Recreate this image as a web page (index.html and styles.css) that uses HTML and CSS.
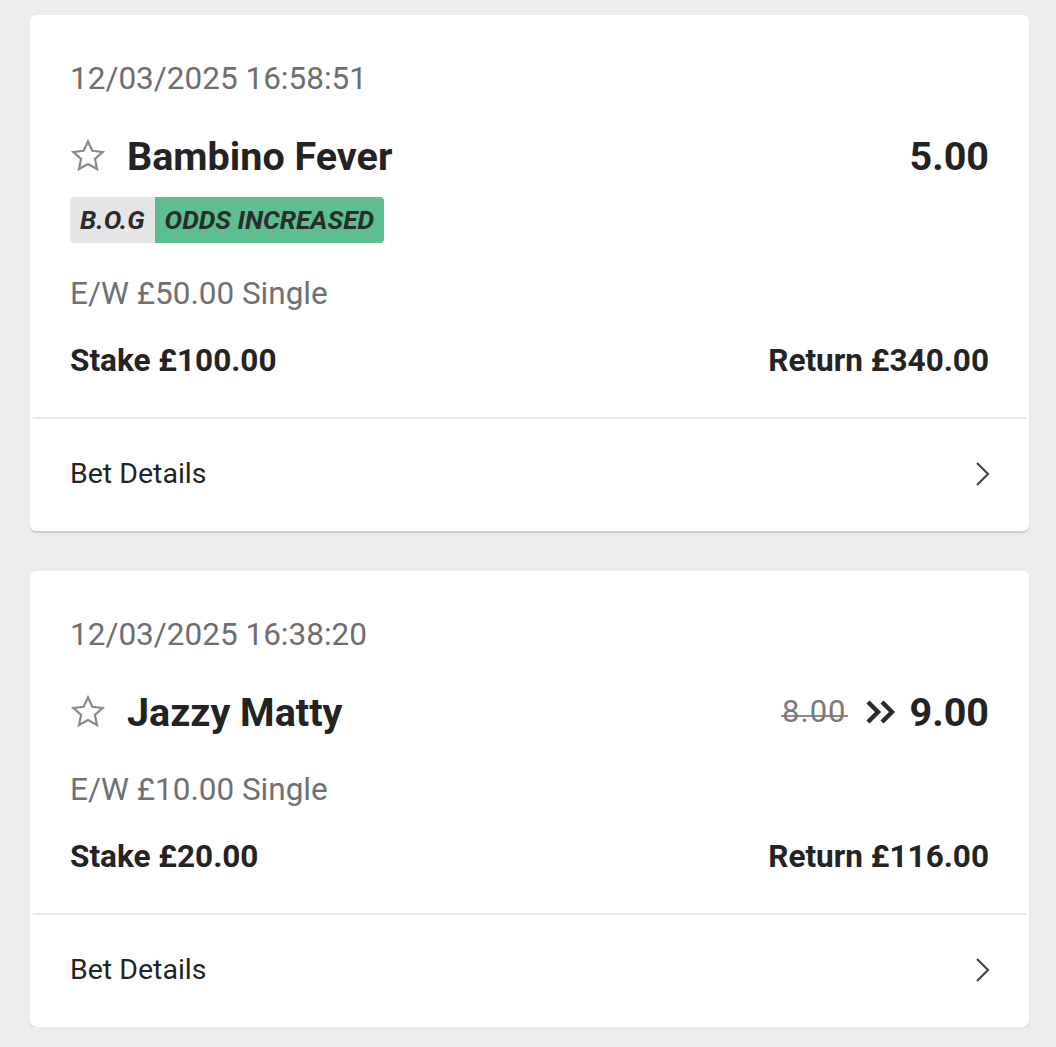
FILE: index.html
```html
<!DOCTYPE html>
<html>
<head>
<meta charset="utf-8">
<link rel="stylesheet" href="styles.css">
</head>
<body>
<div class="list">
  <div class="card">
    <div class="body">
      <div class="date">12/03/2025 16:58:51</div>
      <div class="title-row">
        <div class="name">
          <svg class="star" viewBox="0 0 24 24" width="38" height="38"><path d="M12 2.8l2.75 5.9 6.45.75-4.8 4.4 1.3 6.35L12 17l-5.7 3.2 1.3-6.35-4.8-4.4 6.45-.75z" fill="none" stroke="#8a8a8a" stroke-width="1.4" stroke-linejoin="miter"/></svg>
          <span>Bambino Fever</span>
        </div>
        <div class="odds">5.00</div>
      </div>
      <div class="badges"><span class="bog">B.O.G</span><span class="inc">ODDS INCREASED</span></div>
      <div class="type">E/W £50.00 Single</div>
      <div class="money"><span>Stake £100.00</span><span>Return £340.00</span></div>
    </div>
    <div class="details"><span>Bet Details</span>
      <svg class="chev" viewBox="0 0 16 28" width="16" height="28"><path d="M2 3l11 11L2 25" fill="none" stroke="#444" stroke-width="2.2"/></svg>
    </div>
  </div>
  <div class="card">
    <div class="body">
      <div class="date">12/03/2025 16:38:20</div>
      <div class="title-row">
        <div class="name">
          <svg class="star" viewBox="0 0 24 24" width="38" height="38"><path d="M12 2.8l2.75 5.9 6.45.75-4.8 4.4 1.3 6.35L12 17l-5.7 3.2 1.3-6.35-4.8-4.4 6.45-.75z" fill="none" stroke="#8a8a8a" stroke-width="1.4" stroke-linejoin="miter"/></svg>
          <span>Jazzy Matty</span>
        </div>
        <div class="odds"><span class="old">8.00</span><svg class="arrows" viewBox="0 0 32 24" width="32" height="24"><path d="M3 2l10 10L3 22M17 2l10 10-10 10" fill="none" stroke="#2a2a2a" stroke-width="4.4"/></svg><span>9.00</span></div>
      </div>
      <div class="type second">E/W £10.00 Single</div>
      <div class="money"><span>Stake £20.00</span><span>Return £116.00</span></div>
    </div>
    <div class="details"><span>Bet Details</span>
      <svg class="chev" viewBox="0 0 16 28" width="16" height="28"><path d="M2 3l11 11L2 25" fill="none" stroke="#444" stroke-width="2.2"/></svg>
    </div>
  </div>
</div>
</body>
</html>
```
FILE: styles.css
```css
html, body {
  margin: 0;
  padding: 0;
  background: #ebeceb;
  font-family: Roboto, "Liberation Sans", sans-serif;
  color: #232323;
}
.list {
  padding: 15px 27px 0 30px;
  display: flex;
  flex-direction: column;
  gap: 40px;
}
.card {
  background: #fff;
  border-radius: 6px;
  box-shadow: 0 2px 1px rgba(0,0,0,0.13);
  overflow: hidden;
}
.body {
  padding: 45px 37px 0 37px;
  border-bottom: 2px solid #e9e9e9;
  margin: 0 3px;
}
.date {
  font-size: 31.5px;
  color: #6e6e6e;
  line-height: 38px;
}
.title-row {
  margin-top: 36px;
  display: flex;
  justify-content: space-between;
  align-items: center;
  height: 44px;
}
.name {
  display: flex;
  align-items: center;
  gap: 20px;
  font-size: 39.5px;
  font-weight: 700;
}
.star { display: block; margin-left: -1px; }
.odds {
  font-size: 39.5px;
  font-weight: 700;
  display: flex;
  align-items: center;
}
.old {
  font-size: 31px;
  font-weight: 400;
  color: #7a7a7a;
  letter-spacing: 1px;
  padding: 0 1px;
  background: linear-gradient(#8a8a8a, #8a8a8a) no-repeat 0 60% / 100% 2px;
  margin-right: 17px;
  line-height: 40px;
}
.arrows { margin-right: 13px; display: block; }
.badges {
  margin-top: 19px;
  display: inline-flex;
  border-radius: 4px;
  overflow: hidden;
  height: 46px;
  font-size: 26.3px;
  font-weight: 700;
  font-style: italic;
  color: #2b2b2b;
}
.badges span { display: flex; align-items: center; padding: 0 10px; }
.bog { background: #e5e5e5; }
.inc { background: #5cbe91; }
.type {
  font-size: 31.5px;
  color: #707070;
  line-height: 38px;
  margin-top: 32px;
}
.type.second { margin-top: 37px; }
.money {
  margin-top: 29px;
  display: flex;
  justify-content: space-between;
  font-size: 31.5px;
  font-weight: 700;
  line-height: 38px;
  padding-bottom: 37px;
}
.details {
  display: flex;
  justify-content: space-between;
  align-items: center;
  height: 109px;
  padding: 0 40px 3px;
  font-size: 28.5px;
}
.chev { display: block; margin-right: -2px; }
```
